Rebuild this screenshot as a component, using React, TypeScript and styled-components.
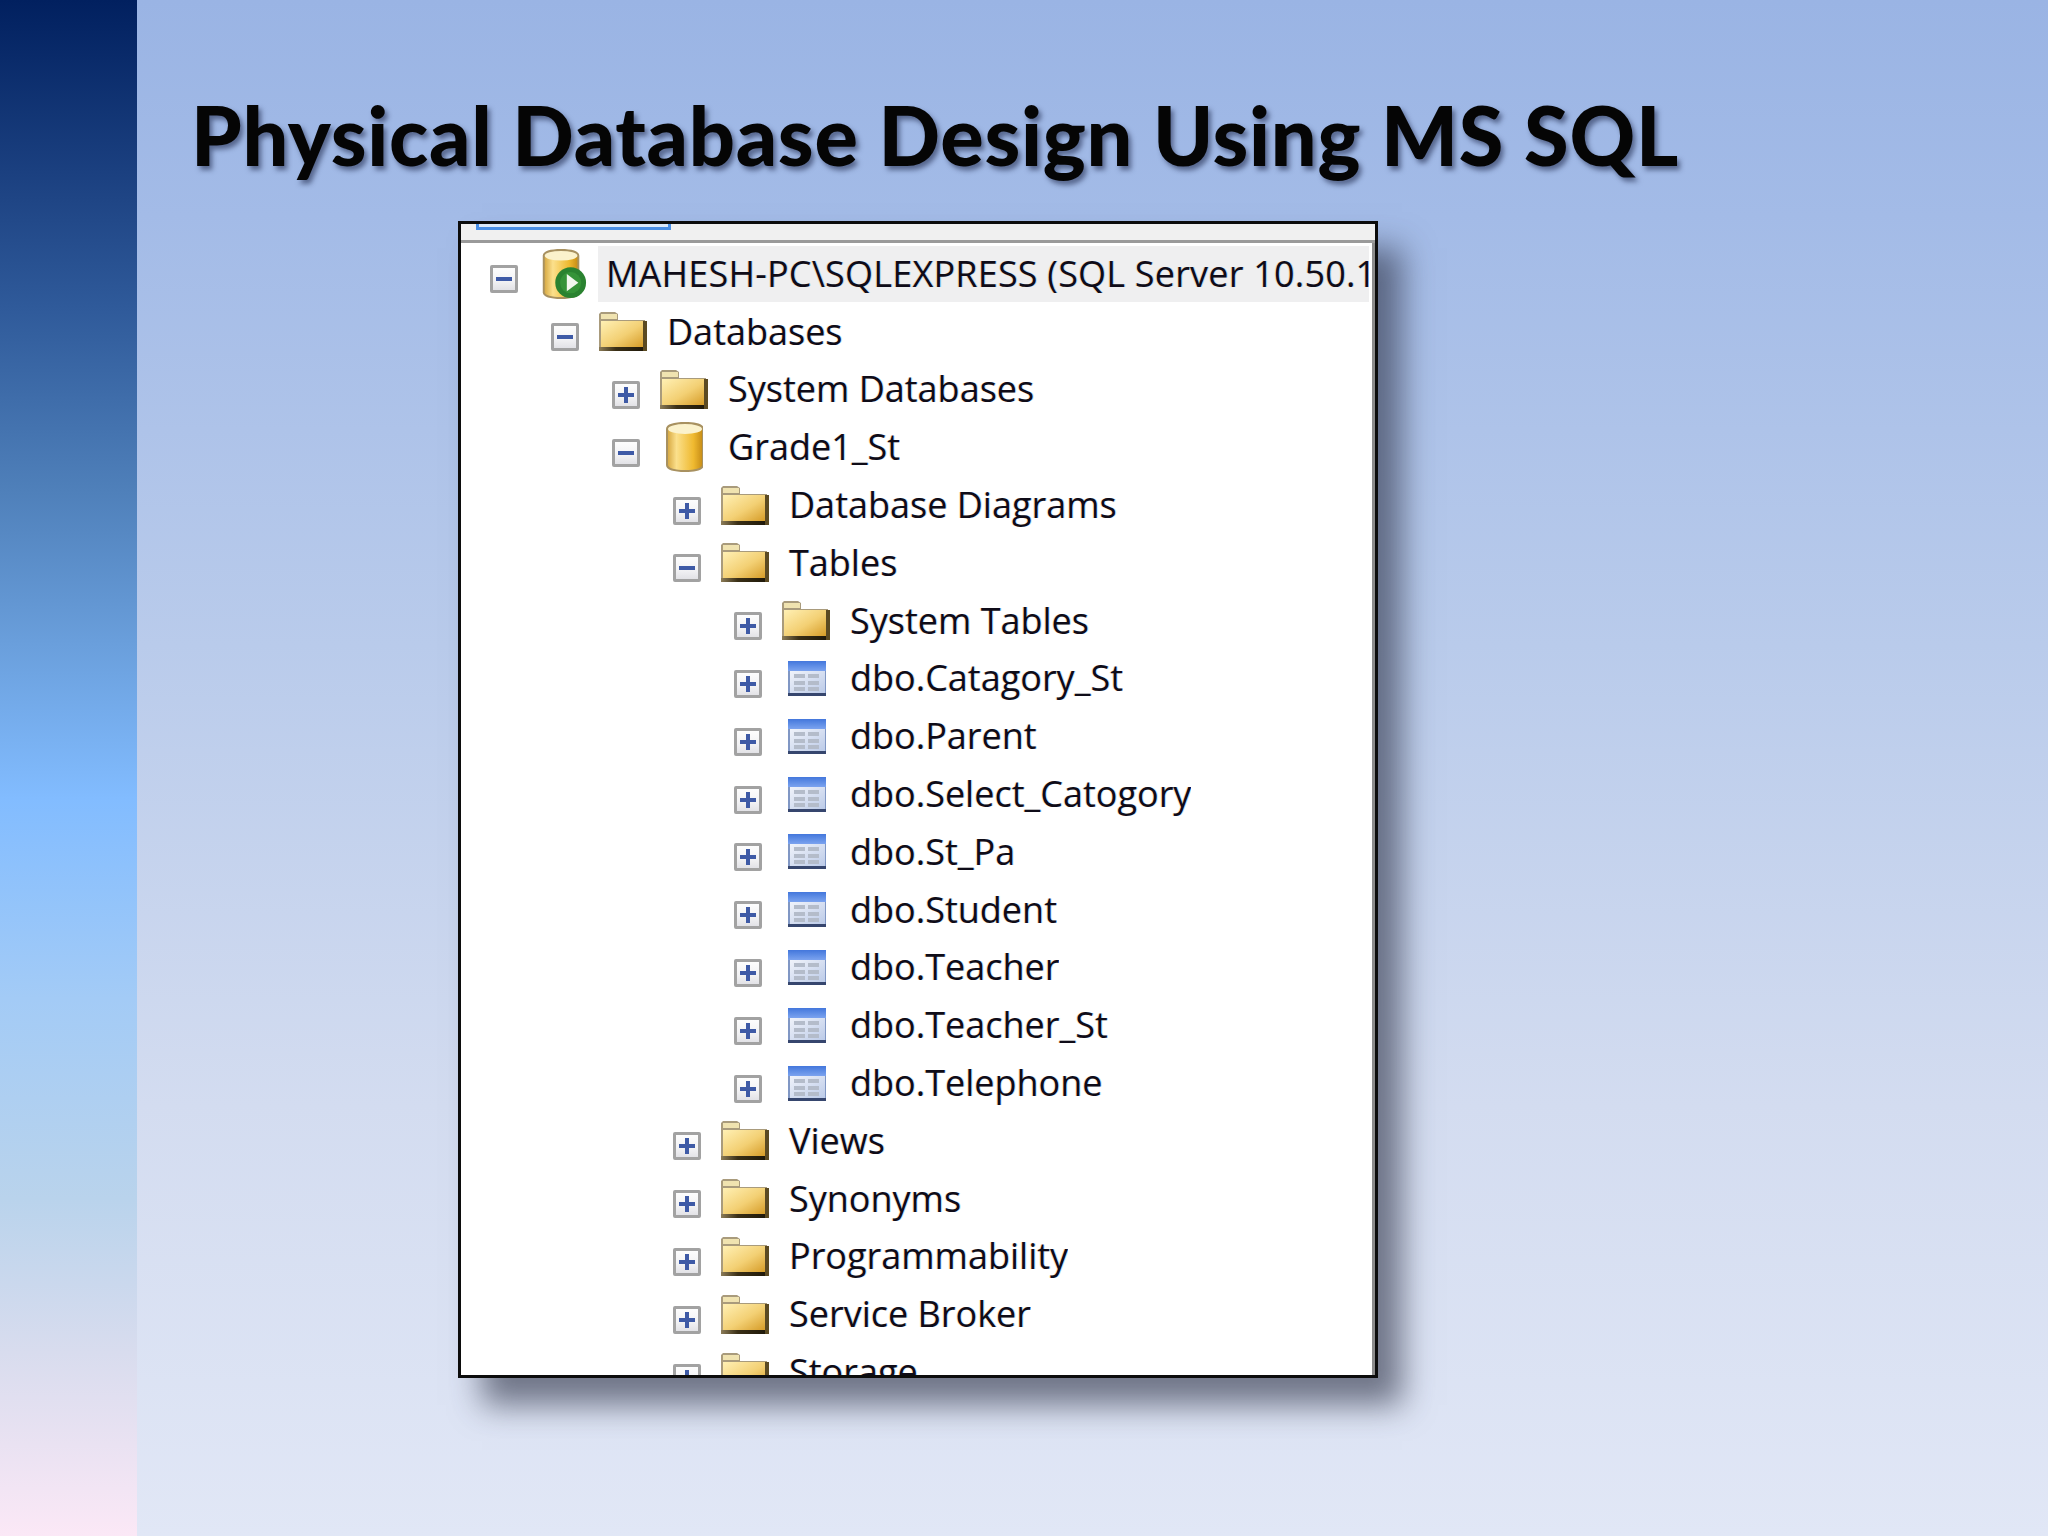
import React from "react";
import styled, { createGlobalStyle } from "styled-components";

const GlobalStyle = createGlobalStyle`
  html, body {
    margin: 0;
    padding: 0;
  }
  body {
    width: 2048px;
    height: 1536px;
    overflow: hidden;
    font-family: "Open Sans", "Liberation Sans", sans-serif;
  }
`;

const Slide = styled.div`
  display: grid;
  grid-template-columns: 137px 1fr;
  width: 2048px;
  height: 1536px;
  background: linear-gradient(180deg, #9ab4e4 0%, #a3bbe7 14%, #b9cbeb 42%, #d3dcf0 72%, #e1e7f6 100%);
`;

const SideBand = styled.div`
  background: linear-gradient(
    180deg,
    #01205f 0%,
    #1f4585 13%,
    #2f5a9a 20%,
    #4f80ba 32%,
    #6a9fdc 42%,
    #82bcff 52%,
    #a3cbf6 65%,
    #b9d3ec 78%,
    #d8dcee 88%,
    #fbe8f6 100%
  );
`;

const Content = styled.main`
  display: flex;
  flex-direction: column;
  padding: 86px 0 0 54px;
`;

const Title = styled.h1`
  margin: 0;
  height: 135px;
  font-family: "Lato", "Liberation Sans", sans-serif;
  font-size: 81px;
  line-height: 97px;
  font-weight: 900;
  letter-spacing: 0.7px;
  color: #050505;
  white-space: nowrap;
  text-shadow: 3px 4px 5px rgba(25, 35, 70, 0.55);
`;

const ExplorerShadow = styled.div`
  width: 920px;
  height: 1157px;
  margin-left: 267px;
  box-shadow: 24px 27px 30px rgba(45, 50, 70, 0.62);
`;

const Explorer = styled.section`
  display: flex;
  flex-direction: column;
  box-sizing: border-box;
  height: 100%;
  overflow: hidden;
  background: #fff;
  border: 3px solid #0c0c0c;
`;

const TabStrip = styled.div`
  flex: none;
  height: 16px;
  background: #f0f0f0;
  border-bottom: 3px solid #9a9a9a;
`;

const ActiveTab = styled.div`
  width: 195px;
  height: 6px;
  margin-left: 15px;
  box-sizing: border-box;
  background: #dbe9fa;
  border: 3px solid #4a8fe6;
  border-top: none;
`;

const Tree = styled.div`
  flex: 1;
  min-height: 0;
  padding: 2px 3px 0 0;
  border-right: 3px solid #8c8c8c;
`;

const Row = styled.div<{ $depth: number }>`
  display: flex;
  align-items: center;
  height: 57.8px;
  padding-left: ${(p) => 29 + p.$depth * 61}px;
`;

const Expander = styled.span<{ $open?: boolean }>`
  position: relative;
  flex: none;
  box-sizing: border-box;
  width: 28px;
  height: 28px;
  margin-top: 11px;
  border: 3px solid #a2a2a2;
  border-radius: 2px;
  background: linear-gradient(180deg, #fdfdfd 0%, #f2f2f4 60%, #e2e2e6 100%);

  &::before {
    content: "";
    position: absolute;
    left: 3px;
    right: 3px;
    top: 9px;
    height: 4px;
    background: #3e5aa6;
  }

  &::after {
    content: "";
    display: ${(p) => (p.$open ? "none" : "block")};
    position: absolute;
    top: 3px;
    bottom: 3px;
    left: 9px;
    width: 4px;
    background: #3e5aa6;
  }
`;

const IconSlot = styled.span`
  flex: none;
  display: flex;
  align-items: center;
  justify-content: center;
  width: 50px;
  height: 52px;
  margin-left: 19px;
  filter: blur(0.5px);
`;

const Label = styled.span<{ $selected?: boolean }>`
  flex: ${(p) => (p.$selected ? 1 : "none")};
  min-width: 0;
  margin-left: 11px;
  padding-left: 8px;
  overflow: hidden;
  font-size: 36px;
  line-height: 56px;
  letter-spacing: ${(p) => (p.$selected ? "0.2px" : "0")};
  white-space: nowrap;
  color: #0f0c18;
  background: ${(p) => (p.$selected ? "#efeff0" : "transparent")};
  text-shadow: -1px 0 rgba(255, 165, 60, 0.28), 1px 0 rgba(50, 160, 255, 0.28);
`;

const SvgDefs = () => (
  <svg width="0" height="0" style={{ position: "absolute" }}>
    <defs>
      <linearGradient id="folderFill" x1="0" y1="0" x2="1" y2="1">
        <stop offset="0" stopColor="#fff0b4" />
        <stop offset="0.55" stopColor="#f3d074" />
        <stop offset="1" stopColor="#d69c28" />
      </linearGradient>
      <linearGradient id="folderBase" x1="0" y1="0" x2="1" y2="0">
        <stop offset="0" stopColor="#8c7c58" />
        <stop offset="0.35" stopColor="#3a2f16" />
        <stop offset="1" stopColor="#1c1608" />
      </linearGradient>
      <linearGradient id="canFill" x1="0" y1="0" x2="1" y2="0">
        <stop offset="0" stopColor="#d9ab45" />
        <stop offset="0.25" stopColor="#fbe08c" />
        <stop offset="0.75" stopColor="#efb92f" />
        <stop offset="1" stopColor="#c98f18" />
      </linearGradient>
      <linearGradient id="tableHead" x1="0" y1="0" x2="0" y2="1">
        <stop offset="0" stopColor="#4377dc" />
        <stop offset="1" stopColor="#7ba3ef" />
      </linearGradient>
      <linearGradient id="tableBody" x1="0" y1="0" x2="1" y2="1">
        <stop offset="0" stopColor="#f0f3fa" />
        <stop offset="1" stopColor="#bccbe8" />
      </linearGradient>
    </defs>
  </svg>
);

const FolderIcon = () => (
  <svg width="48" height="39" viewBox="0 0 48 39">
    <path d="M0 38V2l2-2h14l3 2v6h27v30z" fill="#a99b7c" />
    <rect x="2" y="2" width="16" height="5" fill="#f0e3b0" />
    <rect x="2" y="9" width="42" height="26" fill="url(#folderFill)" />
    <rect x="0" y="35" width="48" height="4" fill="url(#folderBase)" />
    <rect x="44" y="9" width="4" height="30" fill="#5b4a22" />
  </svg>
);

const CanIcon = () => (
  <svg width="38" height="50" viewBox="-1 0 38 50">
    <path d="M0 7C0 2 8 0 19 0s19 2 19 7v36c0 5-8 7-19 7S0 48 0 43z" fill="#a89160" />
    <path d="M2 8v35c0 3 7 5 17 5s17-2 17-5V8z" fill="url(#canFill)" />
    <ellipse cx="19" cy="7" rx="17" ry="5" fill="#fbf2cc" />
  </svg>
);

const ServerIcon = () => (
  <svg width="52" height="52" viewBox="-6 0 52 52">
    <path d="M0 7C0 2 8 0 19 0s19 2 19 7v38c0 5-8 7-19 7S0 50 0 45z" fill="#a89160" />
    <path d="M2 8v37c0 3 7 5 17 5s17-2 17-5V8z" fill="url(#canFill)" />
    <ellipse cx="19" cy="7" rx="17" ry="5" fill="#fbf2cc" />
    <circle cx="29" cy="35" r="16" fill="#2a8230" />
    <circle cx="29" cy="35" r="11" fill="#359338" />
    <path d="M25 26l12 9-12 9z" fill="#f2f7ee" />
  </svg>
);

const TableIcon = () => (
  <svg width="39" height="35" viewBox="-1 0 39 35">
    <rect width="39" height="35" fill="#8097c4" />
    <rect width="39" height="10" fill="url(#tableHead)" />
    <rect x="2" y="10" width="35" height="22" fill="url(#tableBody)" />
    <rect x="6" y="13" width="11" height="4" fill="#b4bcca" />
    <rect x="20" y="13" width="11" height="4" fill="#b4bcca" />
    <rect x="6" y="20" width="11" height="4" fill="#b4bcca" />
    <rect x="20" y="20" width="11" height="4" fill="#b4bcca" />
    <rect x="6" y="26" width="11" height="4" fill="#b4bcca" />
    <rect x="20" y="26" width="11" height="4" fill="#b4bcca" />
    <rect y="32" width="39" height="3" fill="#36466e" />
  </svg>
);

type Kind = "server" | "folder" | "can" | "table";

const icons: Record<Kind, React.ReactNode> = {
  server: <ServerIcon />,
  folder: <FolderIcon />,
  can: <CanIcon />,
  table: <TableIcon />,
};

const nodes: { depth: number; kind: Kind; text: string; open?: boolean; selected?: boolean }[] = [
  { depth: 0, kind: "server", text: "MAHESH-PC\\SQLEXPRESS (SQL Server 10.50.1", open: true, selected: true },
  { depth: 1, kind: "folder", text: "Databases", open: true },
  { depth: 2, kind: "folder", text: "System Databases" },
  { depth: 2, kind: "can", text: "Grade1_St", open: true },
  { depth: 3, kind: "folder", text: "Database Diagrams" },
  { depth: 3, kind: "folder", text: "Tables", open: true },
  { depth: 4, kind: "folder", text: "System Tables" },
  { depth: 4, kind: "table", text: "dbo.Catagory_St" },
  { depth: 4, kind: "table", text: "dbo.Parent" },
  { depth: 4, kind: "table", text: "dbo.Select_Catogory" },
  { depth: 4, kind: "table", text: "dbo.St_Pa" },
  { depth: 4, kind: "table", text: "dbo.Student" },
  { depth: 4, kind: "table", text: "dbo.Teacher" },
  { depth: 4, kind: "table", text: "dbo.Teacher_St" },
  { depth: 4, kind: "table", text: "dbo.Telephone" },
  { depth: 3, kind: "folder", text: "Views" },
  { depth: 3, kind: "folder", text: "Synonyms" },
  { depth: 3, kind: "folder", text: "Programmability" },
  { depth: 3, kind: "folder", text: "Service Broker" },
  { depth: 3, kind: "folder", text: "Storage" },
];

export default function App() {
  return (
    <>
      <GlobalStyle />
      <SvgDefs />
      <Slide>
        <SideBand />
        <Content>
          <Title>Physical Database Design Using MS SQL</Title>
          <ExplorerShadow>
            <Explorer>
              <TabStrip>
                <ActiveTab />
              </TabStrip>
              <Tree>
                {nodes.map((n) => (
                  <Row key={n.text} $depth={n.depth}>
                    <Expander $open={n.open} />
                    <IconSlot>{icons[n.kind]}</IconSlot>
                    <Label $selected={n.selected}>{n.text}</Label>
                  </Row>
                ))}
              </Tree>
            </Explorer>
          </ExplorerShadow>
        </Content>
      </Slide>
    </>
  );
}
